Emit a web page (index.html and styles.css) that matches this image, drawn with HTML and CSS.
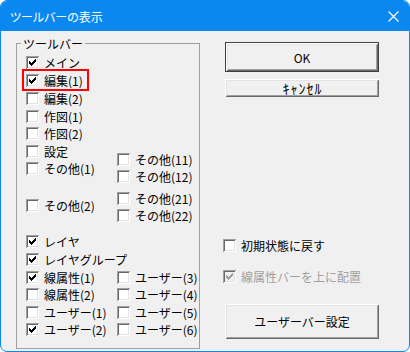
FILE: index.html
```html
<!DOCTYPE html>
<html lang="ja">
<head>
<meta charset="utf-8">
<title>ツールバーの表示</title>
<link rel="stylesheet" href="styles.css">
</head>
<body>
<div class="window">
  <div class="titlebar">
    <span class="title">ツールバーの表示</span>
    <svg class="close" width="11" height="11" viewBox="0 0 11 11"><path d="M0.5 0.5L10.5 10.5M10.5 0.5L0.5 10.5" stroke="#fff" stroke-width="1.1" fill="none"/></svg>
  </div>
  <div class="content">
    <fieldset class="group">
      <legend>ツールバー</legend>
      <div class="cols">
        <div class="col">
          <label class="cb"><span class="box"><svg viewBox="0 0 13 13"><path d="M3 5h1v3h-1zM4 6h1v3h-1zM5 7h1v3h-1zM6 6h1v3h-1zM7 5h1v3h-1zM8 4h1v3h-1zM9 3h1v3h-1z"/></svg></span><span>メイン</span></label>
          <label class="cb marked"><span class="box"><svg viewBox="0 0 13 13"><path d="M3 5h1v3h-1zM4 6h1v3h-1zM5 7h1v3h-1zM6 6h1v3h-1zM7 5h1v3h-1zM8 4h1v3h-1zM9 3h1v3h-1z"/></svg></span><span>編集(1)</span></label>
          <label class="cb"><span class="box"></span><span>編集(2)</span></label>
          <label class="cb"><span class="box"></span><span>作図(1)</span></label>
          <label class="cb g4"><span class="box"></span><span>作図(2)</span></label>
          <label class="cb"><span class="box"></span><span>設定</span></label>
          <label class="cb g4"><span class="box"></span><span>その他(1)</span></label>
          <label class="cb gap-other2"><span class="box"></span><span>その他(2)</span></label>
          <label class="cb gap-layer"><span class="box"><svg viewBox="0 0 13 13"><path d="M3 5h1v3h-1zM4 6h1v3h-1zM5 7h1v3h-1zM6 6h1v3h-1zM7 5h1v3h-1zM8 4h1v3h-1zM9 3h1v3h-1z"/></svg></span><span>レイヤ</span></label>
          <label class="cb"><span class="box"><svg viewBox="0 0 13 13"><path d="M3 5h1v3h-1zM4 6h1v3h-1zM5 7h1v3h-1zM6 6h1v3h-1zM7 5h1v3h-1zM8 4h1v3h-1zM9 3h1v3h-1z"/></svg></span><span>レイヤグループ</span></label>
          <label class="cb"><span class="box"><svg viewBox="0 0 13 13"><path d="M3 5h1v3h-1zM4 6h1v3h-1zM5 7h1v3h-1zM6 6h1v3h-1zM7 5h1v3h-1zM8 4h1v3h-1zM9 3h1v3h-1z"/></svg></span><span>線属性(1)</span></label>
          <label class="cb g4"><span class="box"></span><span>線属性(2)</span></label>
          <label class="cb"><span class="box"></span><span>ユーザー(1)</span></label>
          <label class="cb g4"><span class="box"><svg viewBox="0 0 13 13"><path d="M3 5h1v3h-1zM4 6h1v3h-1zM5 7h1v3h-1zM6 6h1v3h-1zM7 5h1v3h-1zM8 4h1v3h-1zM9 3h1v3h-1z"/></svg></span><span>ユーザー(2)</span></label>
        </div>
        <div class="col">
          <label class="cb gap-other11"><span class="box"></span><span>その他(11)</span></label>
          <label class="cb g4"><span class="box"></span><span>その他(12)</span></label>
          <label class="cb gap-other21"><span class="box"></span><span>その他(21)</span></label>
          <label class="cb g4"><span class="box"></span><span>その他(22)</span></label>
          <label class="cb gap-user3"><span class="box"></span><span>ユーザー(3)</span></label>
          <label class="cb g4"><span class="box"></span><span>ユーザー(4)</span></label>
          <label class="cb"><span class="box"></span><span>ユーザー(5)</span></label>
          <label class="cb g4"><span class="box"></span><span>ユーザー(6)</span></label>
        </div>
      </div>
    </fieldset>
    <div class="side">
      <button class="btn btn-default">OK</button>
      <button class="btn btn-small"><span class="hw">ｷｬﾝｾﾙ</span></button>
      <label class="cb reset"><span class="box"></span><span>初期状態に戻す</span></label>
      <label class="cb disabled"><span class="box"><svg viewBox="0 0 13 13"><path d="M3 5h1v3h-1zM4 6h1v3h-1zM5 7h1v3h-1zM6 6h1v3h-1zM7 5h1v3h-1zM8 4h1v3h-1zM9 3h1v3h-1z"/></svg></span><span>線属性バーを上に配置</span></label>
      <button class="btn btn-tall">ユーザーバー設定</button>
    </div>
  </div>
</div>
</body>
</html>
```

FILE: styles.css
```css
* { box-sizing: border-box; }
html, body { margin: 0; padding: 0; background: #ffffff; }
body {
  font-family: "Noto Sans CJK JP", "Liberation Sans", sans-serif;
  font-size: 12px;
  color: #000;
}
.window {
  width: 410px;
  height: 352px;
  border: 1px solid #0a88f0;
  border-radius: 7px;
  overflow: hidden;
  background: #f0f0f0;
}
.titlebar {
  height: 30px;
  background: #0a88f0;
  color: #fff;
  display: flex;
  align-items: center;
  justify-content: space-between;
  padding: 0 10px 0 9px;
}
.title {
  font-size: 12px;
  line-height: 14px;
  font-feature-settings: "palt";
  margin-top: 1px;
}
.close { display: block; margin-top: 1px; }
.content {
  display: flex;
  align-items: flex-start;
  padding: 5px 0 0 15px;
}
.group {
  margin: 0;
  padding: 0 0 0 4px;
  border: 1px solid #a0a0a0;
  width: 184px;
  height: 313px;
  min-width: 0;
}
.group legend {
  padding: 0 2px;
  line-height: 15px;
  font-size: 12px;
}
.cols {
  display: grid;
  grid-template-columns: 91px 1fr;
  padding: 5px 0 0 5px;
}
.col {
  display: flex;
  flex-direction: column;
  align-items: flex-start;
  gap: 5px;
}
.cb {
  position: relative;
  display: flex;
  align-items: center;
  gap: 5px;
  height: 13px;
  line-height: 13px;
  white-space: nowrap;
}
.box {
  flex: none;
  width: 13px;
  height: 13px;
  background: #fff;
  box-shadow: inset 1px 1px 0 #a0a0a0, inset -1px -1px 0 #ffffff,
              inset 2px 2px 0 #696969, inset -2px -2px 0 #e3e3e3;
}
.box svg { display: block; width: 13px; height: 13px; fill: #000; }
.g4 { margin-top: -1px; }
.gap-other2 { margin-top: 19px; }
.gap-layer { margin-top: 18px; }
.gap-other11 { margin-top: 97px; }
.gap-other21 { margin-top: 4px; }
.gap-user3 { margin-top: 44px; }
.marked::after {
  content: "";
  position: absolute;
  left: -4px;
  top: -5px;
  width: 63px;
  height: 18px;
  border: 2px solid #ff0000;
}
.side {
  display: flex;
  flex-direction: column;
  align-items: flex-start;
  margin-left: 23px;
}
.btn {
  font-family: inherit;
  font-size: 12px;
  color: #000;
  background: #f0f0f0;
  border: none;
  padding: 0;
  margin-left: 2px;
  width: 154px;
  display: flex;
  align-items: center;
  justify-content: center;
  box-shadow: inset 1px 1px 0 #ffffff, inset -1px -1px 0 #696969,
              inset 2px 2px 0 #e3e3e3, inset -2px -2px 0 #a0a0a0;
}
.btn-default {
  margin-top: 6px;
  height: 30px;
  border: 1px solid #404040;
}
.btn-small {
  margin-top: 7px;
  height: 18px;
}
.hw { letter-spacing: 1px; margin-right: -1px; font-size: 14px; line-height: 16px; }
.reset { margin-top: 142px; }
.disabled { margin-top: 18px; color: #a0a0a0; }
.disabled .box { background: #f0f0f0; }
.disabled .box svg { fill: #a0a0a0; }
.btn-tall {
  margin-top: 21px;
  height: 35px;
}
```
